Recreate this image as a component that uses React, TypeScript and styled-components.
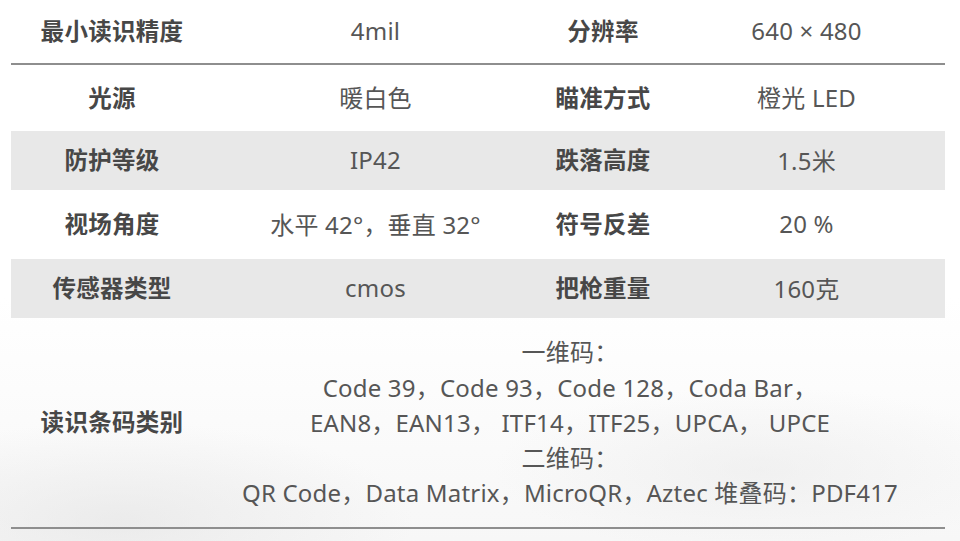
import React from "react";
import styled, { createGlobalStyle } from "styled-components";

const Global = createGlobalStyle`
  html, body { margin: 0; padding: 0; }
  body {
    width: 960px;
    height: 541px;
    overflow: hidden;
    background:
      radial-gradient(ellipse 420px 140px at 120px 520px, rgba(225,225,225,0.55), rgba(255,255,255,0) 70%),
      radial-gradient(ellipse 380px 120px at 760px 470px, rgba(232,232,232,0.5), rgba(255,255,255,0) 70%),
      linear-gradient(180deg, #ffffff 0%, #ffffff 55%, #f7f7f7 100%);
    font-family: "Noto Sans", "Noto Sans CJK SC", sans-serif;
  }
`;

const Table = styled.div`
  margin-left: 11px;
  width: 934px;
  display: grid;
  grid-template-columns: 202px 325px 130px 277px;
`;

const Row = styled.div<{ $h: number; $shade?: boolean; $rule?: boolean }>`
  grid-column: 1 / -1;
  display: grid;
  grid-template-columns: subgrid;
  height: ${(p) => p.$h}px;
  background: ${(p) => (p.$shade ? "#e8e8e8" : "transparent")};
  border-bottom: ${(p) => (p.$rule ? "2px solid #8e8e8e" : "none")};
`;

const Cell = styled.div<{ $span?: string }>`
  display: flex;
  align-items: center;
  justify-content: center;
  grid-column: ${(p) => p.$span || "auto"};
  white-space: nowrap;
  padding-bottom: 3px;
`;

const Label = styled(Cell)`
  font-family: "Noto Sans CJK SC", "Noto Sans", sans-serif;
  font-weight: 700;
  font-size: 23.5px;
  color: #474747;
  letter-spacing: 0.3px;
`;

const Value = styled(Cell)`
  font-size: 24px;
  letter-spacing: 0.2px;
  color: #565656;
`;

const Multi = styled.div`
  display: flex;
  flex-direction: column;
  align-items: center;
  font-size: 24px;
  letter-spacing: 0.2px;
  line-height: 35.3px;
  color: #565656;
  padding-right: 18px;
  padding-top: 3px;
`;

const rows: { h: number; shade?: boolean; rule?: boolean; c: [string, string, string, string] }[] = [
  { h: 63, rule: true, c: ["最小读识精度", "4mil", "分辨率", "640 × 480"] },
  { h: 66, c: ["光源", "暖白色", "瞄准方式", "橙光 LED"] },
  { h: 59, shade: true, c: ["防护等级", "IP42", "跌落高度", "1.5米"] },
  { h: 69, c: ["视场角度", "水平 42°，垂直 32°", "符号反差", "20 %"] },
  { h: 59, shade: true, c: ["传感器类型", "cmos", "把枪重量", "160克"] },
];

const codes = [
  "一维码：",
  "Code 39，Code 93，Code 128，Coda Bar，",
  "EAN8，EAN13， ITF14，ITF25，UPCA， UPCE",
  "二维码：",
  "QR Code，Data Matrix，MicroQR，Aztec 堆叠码：PDF417",
];

export default function App() {
  return (
    <>
      <Global />
      <Table>
        {rows.map((r, i) => (
          <Row key={i} $h={r.h} $shade={r.shade} $rule={r.rule}>
            <Label>{r.c[0]}</Label>
            <Value>{r.c[1]}</Value>
            <Label>{r.c[2]}</Label>
            <Value>{r.c[3]}</Value>
          </Row>
        ))}
        <Row $h={209} $rule>
          <Label>读识条码类别</Label>
          <Cell $span="2 / 5">
            <Multi>
              {codes.map((t, i) => (
                <span key={i}>{t}</span>
              ))}
            </Multi>
          </Cell>
        </Row>
      </Table>
    </>
  );
}
